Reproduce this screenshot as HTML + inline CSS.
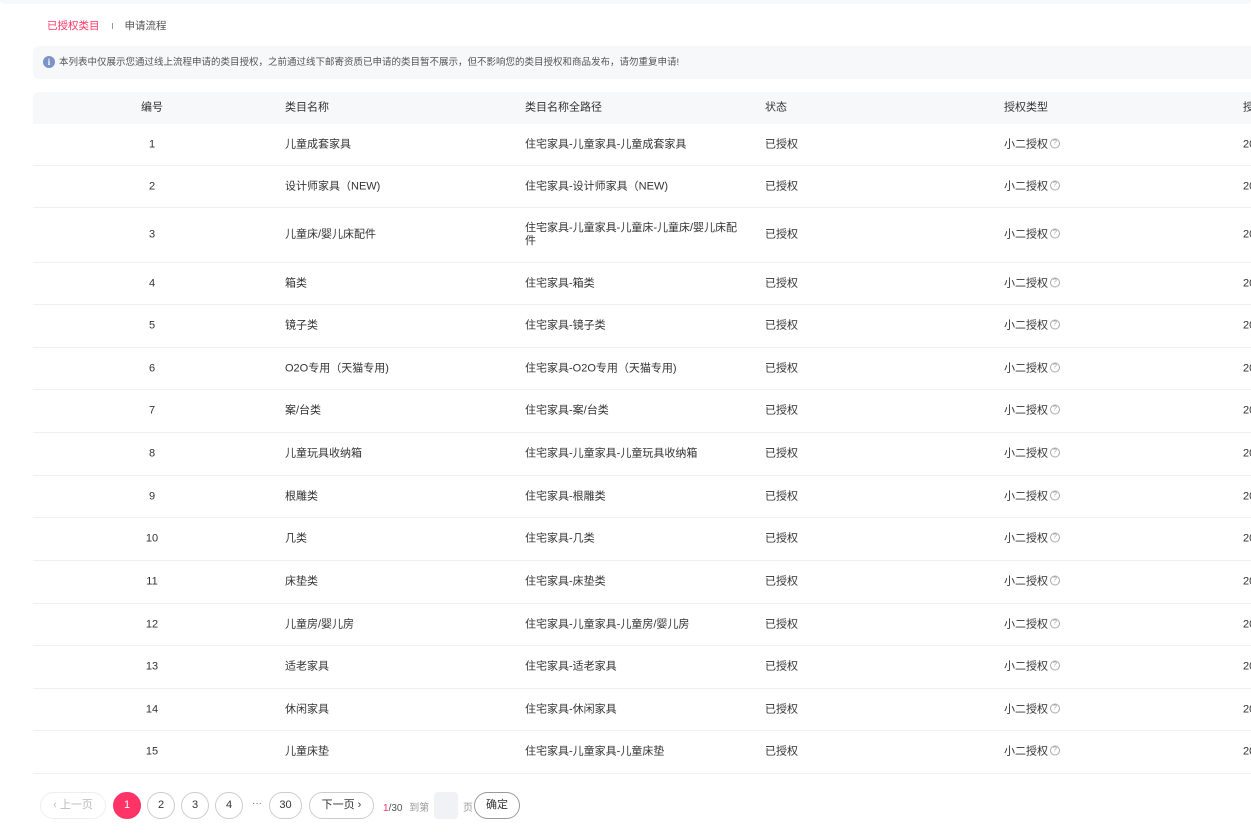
<!DOCTYPE html>
<html><head><meta charset="utf-8"><style>
*{margin:0;padding:0;box-sizing:border-box}
body{width:1251px;height:834px;overflow:hidden;background:#fff;font-family:"Liberation Sans","Noto Sans CJK SC",sans-serif;color:#333;position:relative}
.top{position:absolute;left:0;top:0;width:1251px;height:4px;background:#f7f8fa;border-radius:0 0 6px 6px}
.tabs{position:absolute;top:18px;left:47px;font-size:10.5px;line-height:16px}
.tabs .a{color:#ff3366}
.tabs .sep{display:inline-block;width:1px;height:6px;background:#999;margin:0 12px 1px;vertical-align:middle}
.tabs .b{color:#555}
.note{position:absolute;left:33px;top:46px;width:1230px;height:33px;background:#f7f8fa;border-radius:6px;font-size:9.5px;color:#555;line-height:33px;padding-left:26px}
.note i{position:absolute;left:10px;top:10px;width:12px;height:12px;border-radius:50%;background:#7b93c7;color:#fff;font-style:normal;font-size:9px;line-height:12px;text-align:center;font-family:"Liberation Serif",serif;font-weight:bold}
.row{position:absolute;left:33px;width:1230px;border-bottom:1px solid #eef0f3;font-size:11px;color:#333}
.hd{background:#f7f8fa;border-bottom:none;border-radius:6px 6px 0 0}
.c{position:absolute;top:50%;transform:translateY(-50%);line-height:13px}
.c0{left:0;width:238px;text-align:center}
.c1{left:252px}.c2{left:492px;width:215px}.c3{left:732px}.c4{left:971px}.c5{left:1210px}
.q{display:inline-block;width:10px;height:10px;border:1px solid #aaa;border-radius:50%;font-size:7px;line-height:8px;text-align:center;color:#999;margin-left:2px;vertical-align:middle;position:relative;top:-1px}
.pg{position:absolute;top:792px;height:27px;border:1px solid #ccc;border-radius:14px;font-size:11px;line-height:25px;text-align:center;color:#333}
</style></head><body>
<div class="top"></div>
<div class="tabs"><span class="a">已授权类目</span><span class="sep"></span><span class="b">申请流程</span></div>
<div class="note"><i>i</i>本列表中仅展示您通过线上流程申请的类目授权，之前通过线下邮寄资质已申请的类目暂不展示，但不影响您的类目授权和商品发布，请勿重复申请!</div>
<div class="row hd" style="top:92px;height:32px"><span class="c c0">编号</span><span class="c c1">类目名称</span><span class="c c2">类目名称全路径</span><span class="c c3">状态</span><span class="c c4">授权类型</span><span class="c c5">授</span></div>
<div class="row" style="top:124px;height:42px"><span class="c c0">1</span><span class="c c1">儿童成套家具</span><span class="c c2">住宅家具-儿童家具-儿童成套家具</span><span class="c c3">已授权</span><span class="c c4">小二授权<span class="q">?</span></span><span class="c c5">20</span></div>
<div class="row" style="top:166px;height:42px"><span class="c c0">2</span><span class="c c1">设计师家具（NEW)</span><span class="c c2">住宅家具-设计师家具（NEW)</span><span class="c c3">已授权</span><span class="c c4">小二授权<span class="q">?</span></span><span class="c c5">20</span></div>
<div class="row" style="top:208px;height:55px"><span class="c c0">3</span><span class="c c1">儿童床/婴儿床配件</span><span class="c c2">住宅家具-儿童家具-儿童床-儿童床/婴儿床配件</span><span class="c c3">已授权</span><span class="c c4">小二授权<span class="q">?</span></span><span class="c c5">20</span></div>
<div class="row" style="top:263px;height:42px"><span class="c c0">4</span><span class="c c1">箱类</span><span class="c c2">住宅家具-箱类</span><span class="c c3">已授权</span><span class="c c4">小二授权<span class="q">?</span></span><span class="c c5">20</span></div>
<div class="row" style="top:305px;height:43px"><span class="c c0">5</span><span class="c c1">镜子类</span><span class="c c2">住宅家具-镜子类</span><span class="c c3">已授权</span><span class="c c4">小二授权<span class="q">?</span></span><span class="c c5">20</span></div>
<div class="row" style="top:348px;height:42px"><span class="c c0">6</span><span class="c c1">O2O专用（天猫专用)</span><span class="c c2">住宅家具-O2O专用（天猫专用)</span><span class="c c3">已授权</span><span class="c c4">小二授权<span class="q">?</span></span><span class="c c5">20</span></div>
<div class="row" style="top:390px;height:43px"><span class="c c0">7</span><span class="c c1">案/台类</span><span class="c c2">住宅家具-案/台类</span><span class="c c3">已授权</span><span class="c c4">小二授权<span class="q">?</span></span><span class="c c5">20</span></div>
<div class="row" style="top:433px;height:43px"><span class="c c0">8</span><span class="c c1">儿童玩具收纳箱</span><span class="c c2">住宅家具-儿童家具-儿童玩具收纳箱</span><span class="c c3">已授权</span><span class="c c4">小二授权<span class="q">?</span></span><span class="c c5">20</span></div>
<div class="row" style="top:476px;height:42px"><span class="c c0">9</span><span class="c c1">根雕类</span><span class="c c2">住宅家具-根雕类</span><span class="c c3">已授权</span><span class="c c4">小二授权<span class="q">?</span></span><span class="c c5">20</span></div>
<div class="row" style="top:518px;height:43px"><span class="c c0">10</span><span class="c c1">几类</span><span class="c c2">住宅家具-几类</span><span class="c c3">已授权</span><span class="c c4">小二授权<span class="q">?</span></span><span class="c c5">20</span></div>
<div class="row" style="top:561px;height:43px"><span class="c c0">11</span><span class="c c1">床垫类</span><span class="c c2">住宅家具-床垫类</span><span class="c c3">已授权</span><span class="c c4">小二授权<span class="q">?</span></span><span class="c c5">20</span></div>
<div class="row" style="top:604px;height:42px"><span class="c c0">12</span><span class="c c1">儿童房/婴儿房</span><span class="c c2">住宅家具-儿童家具-儿童房/婴儿房</span><span class="c c3">已授权</span><span class="c c4">小二授权<span class="q">?</span></span><span class="c c5">20</span></div>
<div class="row" style="top:646px;height:43px"><span class="c c0">13</span><span class="c c1">适老家具</span><span class="c c2">住宅家具-适老家具</span><span class="c c3">已授权</span><span class="c c4">小二授权<span class="q">?</span></span><span class="c c5">20</span></div>
<div class="row" style="top:689px;height:42px"><span class="c c0">14</span><span class="c c1">休闲家具</span><span class="c c2">住宅家具-休闲家具</span><span class="c c3">已授权</span><span class="c c4">小二授权<span class="q">?</span></span><span class="c c5">20</span></div>
<div class="row" style="top:731px;height:43px"><span class="c c0">15</span><span class="c c1">儿童床垫</span><span class="c c2">住宅家具-儿童家具-儿童床垫</span><span class="c c3">已授权</span><span class="c c4">小二授权<span class="q">?</span></span><span class="c c5">20</span></div>

<div class="pg" style="left:40px;width:66px;border-color:#eee;color:#bbb">‹ 上一页</div>
<div class="pg" style="left:113px;width:28px;background:#ff3366;border-color:#ff3366;color:#fff">1</div>
<div class="pg" style="left:147px;width:28px">2</div>
<div class="pg" style="left:181px;width:28px">3</div>
<div class="pg" style="left:215px;width:28px">4</div>
<div style="position:absolute;left:252px;top:798px;font-size:10px;color:#777">···</div>
<div class="pg" style="left:269px;width:33px">30</div>
<div class="pg" style="left:309px;width:65px">下一页 ›</div>
<div style="position:absolute;left:383px;top:799px;font-size:10px;color:#555"><span style="color:#ff3366">1</span>/30 <span style="color:#999;margin-left:4px">到第</span></div>
<div style="position:absolute;left:434px;top:792px;width:24px;height:27px;background:#f0f2f5;border-radius:4px"></div>
<div style="position:absolute;left:463px;top:799px;font-size:10px;color:#999">页</div>
<div class="pg" style="left:474px;width:46px;border-color:#999">确定</div>
</body></html>
